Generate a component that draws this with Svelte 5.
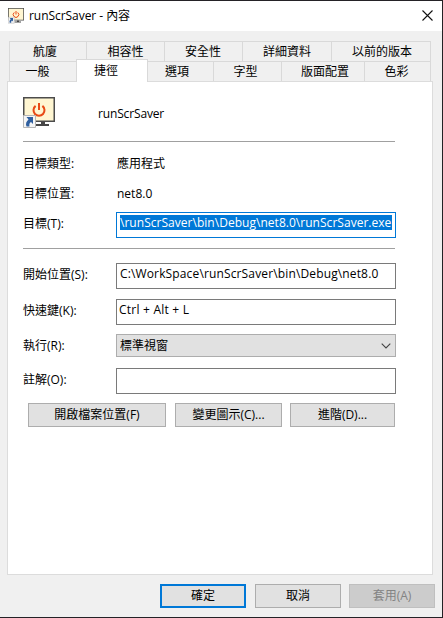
<script>
  const backTabs = [
    { label: '航廈', width: 77, dx: -3 },
    { label: '相容性', width: 78, dx: 0 },
    { label: '安全性', width: 78, dx: -0.5 },
    { label: '詳細資料', width: 89, dx: 0 },
    { label: '以前的版本', width: 99, dx: 1 }
  ];
  const frontTabs = [
    { label: '一般', width: 67, dx: -5.5 },
    { label: '捷徑', width: 72, dx: -6, active: true },
    { label: '選項', width: 66, dx: -3.5 },
    { label: '字型', width: 68, dx: -2 },
    { label: '版面配置', width: 83, dx: 2 },
    { label: '色彩', width: 66, dx: -1 }
  ];
</script>

{#snippet shortcutIcon(size)}
  <svg width={size} height={size} viewBox="0 0 32 32" aria-hidden="true">
    <path d="M0 0h32v25H0z" fill="#4c4c4c" />
    <path d="M1.500 1.500h29v22h-29z" fill="#fff6d2" />
    <path d="M18 25h4v2h4v2H13v-2h5z" fill="#464646" />
    <path d="M12.600 8.900A5.500 5.500 0 1 0 19.400 8.900" fill="none" stroke="#e84a16" stroke-width="2" />
    <path d="M16 6v7" stroke="#e84a16" stroke-width="2" />
    <path d="M.5 18.500h12v12H.5z" fill="#f5f5f5" stroke="#b5b5b5" />
    <path d="M3.500 20H10v7L8 25C6.500 26 6 27.200 6.500 29.500H3.500C2.300 26.500 3.500 24.200 5.500 22.500z" fill="#2f5f9f" />
  </svg>
{/snippet}

<div class="window">
  <header>
    {@render shortcutIcon(16)}
    <span class="title">runScrSaver - 內容</span>
    <svg class="close" width="11" height="11" viewBox="0 0 11 11"><path d="M.5 .5l10 10M10.500 .5l-10 10" stroke="#111" stroke-width="1.100" /></svg>
  </header>

  <nav>
    <div class="tabs back">
      {#each backTabs as t}
        <div class="tab" style:width="{t.width}px"><span style:margin-left="{t.dx * 2}px">{t.label}</span></div>
      {/each}
    </div>
    <div class="tabs front">
      {#each frontTabs as t}
        <div class="tab" class:active={t.active} style:width="{t.width}px"><span style:margin-left="{t.dx * 2}px">{t.label}</span></div>
      {/each}
    </div>
  </nav>

  <main>
    <div class="head">{@render shortcutIcon(32)}<span class="name">runScrSaver</span></div>
    <div class="rule"></div>
    <div class="row info first"><span class="label">目標類型:</span><span class="value">應用程式</span></div>
    <div class="row info"><span class="label">目標位置:</span><span class="value">net8.0</span></div>
    <div class="row target"><span class="label">目標(T):</span><div class="input focus"><span class="sel">\runScrSaver\bin\Debug\net8.0\runScrSaver.exe</span></div></div>
    <div class="rule second"></div>
    <div class="row start"><span class="label">開始位置(S):</span><div class="input"><span class="path">C:\WorkSpace\runScrSaver\bin\Debug\net8.0</span></div></div>
    <div class="row hot"><span class="label">快速鍵(K):</span><div class="input"><span class="key">Ctrl + Alt + L</span></div></div>
    <div class="row run"><span class="label">執行(R):</span><div class="select"><span>標準視窗</span><svg width="10" height="6" viewBox="0 0 10 6"><path d="M.7 .7L5 5L9.300 .7" fill="none" stroke="#444" stroke-width="1.100" /></svg></div></div>
    <div class="row note"><span class="label">註解(O):</span><div class="input"></div></div>
    <div class="actions">
      <button class="open">開啟檔案位置(F)</button>
      <button class="change">變更圖示(C)...</button>
      <button class="advanced">進階(D)...</button>
    </div>
  </main>

  <footer>
    <button class="default">確定</button>
    <button>取消</button>
    <button disabled>套用(A)</button>
  </footer>
</div>

<style>
  :global(body) { margin: 0; }
  .window, .window * { box-sizing: border-box; }
  .window {
    width: 443px;
    height: 618px;
    display: flex;
    flex-direction: column;
    background: #f0f0f0;
    border: 1px solid #242226;
    border-left: 0;
    color: #000;
    font: 12px/16px "Open Sans", "Noto Sans CJK TC", sans-serif;
    white-space: nowrap;
    overflow: hidden;
  }
  header {
    height: 30px;
    flex: none;
    display: flex;
    align-items: center;
    padding: 0 9px 0 8px;
    background: #fff;
  }
  .title { margin-left: 5px; letter-spacing: -0.05px; }
  .close { margin-left: auto; margin-top: -2px; }
  nav { padding: 10px 0 0 9px; flex: none; height: 50px; }
  .tabs { display: flex; height: 20px; width: 422px; border-left: 1px solid #d9d9d9; }
  .tab {
    flex: none;
    height: 20px;
    display: flex;
    justify-content: center;
    align-items: center;
    border-top: 1px solid #d9d9d9;
    border-right: 1px solid #d9d9d9;
  }
  .active {
    height: 23px;
    margin-top: -2px;
    margin-left: -1px;
    padding-bottom: 1px;
    background: #fff;
    border-left: 1px solid #d9d9d9;
    position: relative;
    z-index: 1;
  }
  main {
    width: 426px;
    height: 494px;
    flex: none;
    margin-left: 7px;
    padding: 15px 0 0 15px;
    background: #fff;
    border: 1px solid #dcdcdc;
  }
  .head { display: flex; height: 32px; }
  .name { margin: 1px 0 0 43px; line-height: 32px; letter-spacing: -0.15px; }
  .rule { width: 372px; height: 1px; margin-top: 12px; background: #a0a0a0; }
  .row { display: flex; width: 373px; }
  .label { width: 93px; flex: none; }
  .info { height: 30px; line-height: 30px; }
  .first { margin-top: 7px; }
  .value { margin-left: 1px; }
  .target { margin-top: 3px; }
  .rule.second { margin-top: 10px; }
  .start { margin-top: 14px; }
  .start, .hot, .target, .note { height: 26px; line-height: 23px; }
  .hot { margin-top: 10px; }
  .run { margin-top: 9px; height: 23px; line-height: 23px; }
  .note { margin-top: 11px; }
  .input {
    width: 280px;
    height: 26px;
    padding: 2px 3px;
    border: 1px solid #7a7a7a;
    background: #fff;
    line-height: 16px;
    overflow: hidden;
  }
  .hot .input { padding-left: 2px; }
  .focus { border-color: #0078d7; }
  .input span { display: block; }
  .input .sel { width: 272px; height: 15px; line-height: 16px; background: #0078d7; color: #fff; letter-spacing: 0.03px; }
  .input .path { letter-spacing: 0.14px; }
  .input .key { letter-spacing: 0.22px; }
  .select {
    width: 280px;
    height: 23px;
    display: flex;
    align-items: center;
    justify-content: space-between;
    padding: 0 4px 0 3px;
    border: 1px solid #adadad;
    background: #e1e1e1;
  }
  .actions { display: flex; margin: 9px 0 0 5px; }
  button {
    width: 86px;
    height: 24px;
    padding: 0;
    border: 1px solid #adadad;
    border-radius: 0;
    background: #e1e1e1;
    color: #000;
    font: inherit;
  }
  .open { width: 138px; }
  .change { width: 107px; margin-left: 9px; }
  .advanced { width: 105px; margin-left: 8px; }
  footer { display: flex; margin: 9px 0 0 160px; }
  footer button { margin-right: 8px; flex: none; }
  footer .default { border: 2px solid #0078d7; margin-right: 9px; }
  footer button:disabled { background: #ccc; border-color: #bfbfbf; color: #838383; }
</style>
